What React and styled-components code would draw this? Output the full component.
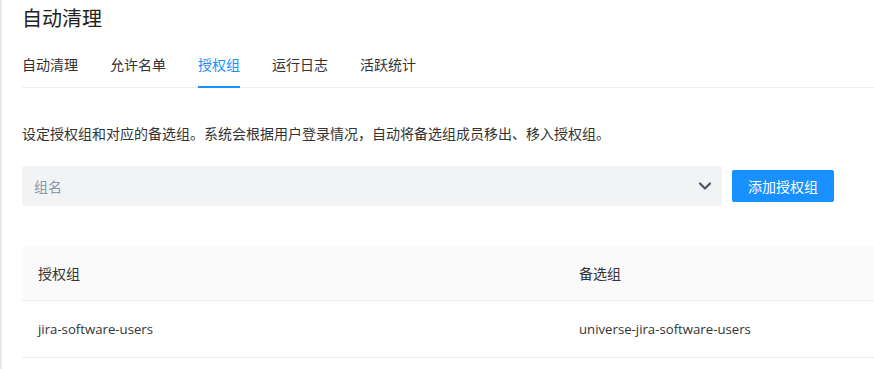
import React from "react";
import styled, { createGlobalStyle } from "styled-components";

const GlobalStyle = createGlobalStyle`
  html, body {
    margin: 0;
    padding: 0;
    background: #fff;
    overflow: hidden;
  }
  body {
    font-family: "Noto Sans CJK SC", "Open Sans", sans-serif;
    color: #333;
  }
`;

const Page = styled.div`
  min-height: 369px;
  border-left: 2px solid #e8e8e8;
  padding-left: 20px;
  box-sizing: border-box;
  overflow: hidden;
`;

const Title = styled.h1`
  margin: 0;
  padding-top: 4px;
  font-size: 20px;
  font-weight: 400;
  line-height: 28px;
  color: #222;
`;

const Tabs = styled.div`
  display: flex;
  margin-top: 20px;
  border-bottom: 1px solid #eeeeee;
`;

const Tab = styled.div`
  font-size: 14px;
  line-height: 20px;
  padding: 2px 0 12px;
  margin-right: ${(p) => p.$gap}px;
  color: ${(p) => (p.$active ? "#1890ff" : "#333")};
  border-bottom: 2px solid ${(p) => (p.$active ? "#1890ff" : "transparent")};
  margin-bottom: -1px;
`;

const Desc = styled.p`
  margin: 35px 0 0;
  font-size: 14px;
  line-height: 20px;
  color: #333;
`;

const Toolbar = styled.div`
  display: flex;
  align-items: center;
  gap: 10px;
  margin-top: 23px;
`;

const Select = styled.div`
  width: 700px;
  height: 40px;
  background: #f2f3f5;
  border-radius: 3px;
  display: flex;
  align-items: center;
  justify-content: space-between;
  padding: 0 10px 0 12px;
  box-sizing: border-box;
`;

const Placeholder = styled.span`
  font-size: 14px;
  color: #8c96a5;
`;

const AddButton = styled.button`
  width: 102px;
  height: 32px;
  border: none;
  border-radius: 2px;
  background: #1890ff;
  color: #fff;
  font-family: inherit;
  font-size: 14px;
  padding: 0;
`;

const Table = styled.div`
  margin-top: 40px;
  width: 1100px;
`;

const Row = styled.div`
  display: grid;
  grid-template-columns: 541px 1fr;
  height: ${(p) => (p.$head ? 54 : 56)}px;
  align-items: center;
  background: ${(p) => (p.$head ? "#fafafa" : "#fff")};
  border-bottom: 1px solid #ebebeb;
  font-size: 14px;
  color: #333;
`;

const Cell = styled.div`
  padding-left: 16px;
  font-family: ${(p) =>
    p.$latin ? '"Open Sans", "Noto Sans CJK SC", sans-serif' : "inherit"};
  font-size: ${(p) => (p.$latin ? 13.2 : 14)}px;
`;

const Chevron = () => (
  <svg width="14" height="14" viewBox="0 0 14 14">
    <path
      d="M2 4.5 L7 9.5 L12 4.5"
      fill="none"
      stroke="#4a5466"
      strokeWidth="2.2"
      strokeLinecap="round"
      strokeLinejoin="round"
    />
  </svg>
);

const tabs = [
  { label: "自动清理", gap: 32 },
  { label: "允许名单", gap: 32 },
  { label: "授权组", gap: 32, active: true },
  { label: "运行日志", gap: 32 },
  { label: "活跃统计", gap: 0 },
];

const rows = [
  { group: "jira-software-users", backup: "universe-jira-software-users" },
];

export default function App() {
  return (
    <>
      <GlobalStyle />
      <Page>
        <Title>自动清理</Title>
        <Tabs>
          {tabs.map((t) => (
            <Tab key={t.label} $gap={t.gap} $active={t.active}>
              {t.label}
            </Tab>
          ))}
        </Tabs>
        <Desc>
          设定授权组和对应的备选组。系统会根据用户登录情况，自动将备选组成员移出、移入授权组。
        </Desc>
        <Toolbar>
          <Select>
            <Placeholder>组名</Placeholder>
            <Chevron />
          </Select>
          <AddButton>添加授权组</AddButton>
        </Toolbar>
        <Table>
          <Row $head>
            <Cell>授权组</Cell>
            <Cell>备选组</Cell>
          </Row>
          {rows.map((r) => (
            <Row key={r.group}>
              <Cell $latin>{r.group}</Cell>
              <Cell $latin>{r.backup}</Cell>
            </Row>
          ))}
        </Table>
      </Page>
    </>
  );
}
